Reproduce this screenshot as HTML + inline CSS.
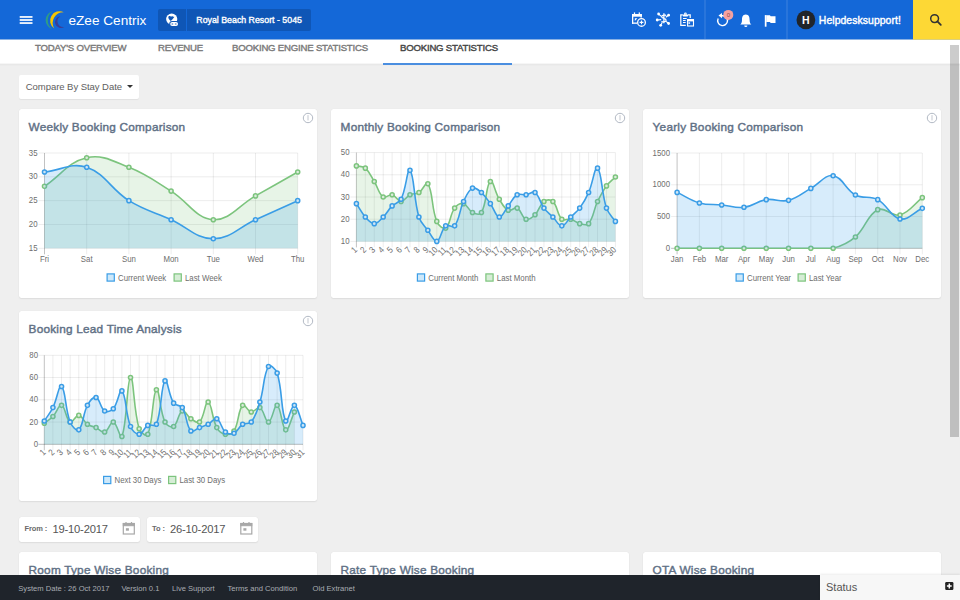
<!DOCTYPE html>
<html><head><meta charset="utf-8">
<style>
*{margin:0;padding:0;box-sizing:border-box}
html,body{width:960px;height:600px;overflow:hidden;background:#efefef;font-family:"Liberation Sans",sans-serif}
.abs{position:absolute}
#hdr{left:0;top:0;width:960px;height:39px;background:#1468d8}
.card{position:absolute;background:#fff;border-radius:2.5px;box-shadow:0 0 1px rgba(0,0,0,0.09),0 1px 1.5px rgba(0,0,0,0.07)}
.ttl{position:absolute;font-weight:normal;font-size:11.8px;color:#607085;white-space:nowrap;letter-spacing:0.22px;-webkit-text-stroke:0.42px #607085}
.tab{position:absolute;top:42.3px;font-size:9.6px;font-weight:normal;color:#7a7a7a;white-space:nowrap;letter-spacing:-0.2px;-webkit-text-stroke:0.4px #7a7a7a}
.tk{font-family:"Liberation Sans",sans-serif;font-size:9px;fill:#6e6e6e}
svg{position:absolute;left:0;top:0}
.ft{position:absolute;top:584px;font-size:7.6px;color:#a9adb3;white-space:nowrap}
</style></head><body>
<svg width="960" height="70" style="position:absolute;left:0;top:0"><rect x="0" y="0" width="960" height="39.6" fill="#1468d8"/><rect x="0" y="39.1" width="913" height="0.5" fill="#0e5cc4"/><rect x="0" y="39.6" width="960" height="24.15" fill="#fff"/><rect x="0" y="63.75" width="960" height="1.65" fill="#e8e8e8"/></svg>
<svg width="960" height="40" viewBox="0 0 960 40" style="position:absolute;left:0;top:0">
<!-- hamburger -->
<rect x="19.7" y="16.1" width="12.8" height="1.7" fill="#fff"/>
<rect x="19.7" y="19.15" width="12.8" height="1.7" fill="#fff"/>
<rect x="19.7" y="22.2" width="12.8" height="1.7" fill="#fff"/>
<!-- logo -->
<path d="M53.5 11 A9.33 9.33 0 0 0 52.8 29.3 A10.51 10.51 0 0 1 53.5 11Z" fill="#2f9c86"/>
<path d="M63.8 12.2 A9.45 9.45 0 0 0 54.3 28.5 A10.72 10.72 0 0 1 63.8 12.2Z" fill="#f7c600"/>
<path d="M60.3 16.3 A5.9 5.9 0 1 0 64.3 27 A5.82 5.82 0 0 1 60.3 16.3Z" fill="#3b3f96"/>
<!-- globe -->
<rect x="158" y="9" width="28" height="22" rx="2" fill="#0f56b6"/>
<rect x="187" y="9" width="124" height="22" rx="2" fill="#0f56b6"/>
<rect x="185" y="9" width="3" height="22" fill="#0f56b6"/>
<rect x="186" y="9" width="1" height="22" fill="#1468d8"/>
<circle cx="171.7" cy="19.1" r="5.6" fill="#fff"/>
<path d="M168.3 17.2 C168.5 15.6 170.4 15.7 171.2 16.8 C171.7 16.2 172.6 16.2 173.1 16.8 C173.6 16.6 174.1 16.6 174.3 16.9 C173.4 18.3 172.2 19.6 170.8 21 C169.6 19.9 168.2 18.8 168.3 17.2Z" fill="#0f56b6"/>
<rect x="169.2" y="21" width="9.8" height="5.9" rx="2.9" fill="#0f56b6"/>
<rect x="170.2" y="22" width="7.8" height="3.9" rx="1.95" fill="#fff"/>
<rect x="171.4" y="23.2" width="2" height="1.5" rx="0.7" fill="#6a97d6"/>
<rect x="174.7" y="23.2" width="2" height="1.5" rx="0.7" fill="#6a97d6"/>
<!-- icon1 calendar plus -->
<rect x="632" y="14" width="9.8" height="2.7" fill="#fff"/>
<rect x="632" y="14" width="1.3" height="9.8" fill="#fff"/>
<rect x="632" y="22.5" width="5" height="1.3" fill="#fff"/>
<rect x="640.5" y="14" width="1.3" height="3.6" fill="#fff"/>
<rect x="633.9" y="12.4" width="1.2" height="2.2" fill="#fff"/>
<rect x="638.7" y="12.4" width="1.2" height="2.2" fill="#fff"/>
<path d="M634.8 18.3H637.4L634.8 20.9Z" fill="#fff"/>
<circle cx="641.5" cy="22.4" r="3.85" fill="#1468d8" stroke="#fff" stroke-width="1.3"/>
<path d="M641.5 20.5V24.3 M639.6 22.4H643.4" stroke="#fff" stroke-width="1.1"/>
<!-- icon2 network dollar -->
<path d="M658.6 14L661.6 16.6 M668.6 15.2L665.8 17.3 M657.2 20L661.2 19.6 M660.7 25.3L662.2 22.6 M668.6 23.5L666 21.4" stroke="#fff" stroke-width="1.1"/>
<circle cx="658.6" cy="14" r="1.4" fill="#fff"/><circle cx="668.6" cy="15.2" r="1.4" fill="#fff"/>
<circle cx="657.2" cy="20" r="1.4" fill="#fff"/><circle cx="660.7" cy="25.3" r="1.4" fill="#fff"/>
<circle cx="668.6" cy="23.5" r="1.4" fill="#fff"/>
<path d="M666.1 15.6C665.4 14.8 661.7 14.5 661.7 16.7C661.7 18.7 666.1 18 666.1 20.2C666.1 22.4 662.1 22.2 661.5 21.3 M663.9 13.3V23.3" fill="none" stroke="#fff" stroke-width="1.25"/>
<!-- icon3 clipboard calendar -->
<path d="M682.8 14.8H680.8V25.3H685.8 M687.8 14.8H690.2V18" fill="none" stroke="#fff" stroke-width="1.2"/>
<rect x="682.8" y="14.6" width="5.2" height="1.8" rx="0.6" fill="#fff"/>
<circle cx="685.4" cy="13.9" r="1.35" fill="#fff"/>
<circle cx="685.4" cy="13.9" r="0.45" fill="#1468d8"/>
<path d="M683 18.5H686.7 M683 20.5H685.7 M683 22.5H685.7" stroke="#fff" stroke-width="1"/>
<rect x="687.6" y="19.7" width="5.9" height="6.3" fill="#1468d8" stroke="#fff" stroke-width="1.1"/>
<rect x="687.1" y="19.1" width="6.9" height="2.3" fill="#fff"/>
<rect x="688.4" y="22.3" width="1.7" height="1.5" fill="#fff"/>
<!-- dividers -->
<rect x="704.5" y="0" width="1" height="39" fill="rgba(255,255,255,0.18)"/>
<rect x="786.5" y="0" width="1" height="39" fill="rgba(255,255,255,0.18)"/>
<!-- undo -->
<path d="M718.2 18.5 A4.9 4.9 0 1 0 722 15.8" fill="none" stroke="#fff" stroke-width="1.4"/>
<path d="M718.5 15.6L722 12.9V18.3Z" fill="#fff"/>
<circle cx="728.3" cy="14.9" r="5" fill="#f4a1a1"/>
<text x="728.3" y="17.1" text-anchor="middle" font-family="Liberation Sans" font-size="6" fill="#8c4848">0</text>
<!-- bell -->
<path d="M745.8 14.6 C742.6 14.6 742 17.5 742 20 C742 22.5 741.2 23.8 740.2 24.6H751.4C750.4 23.8 749.6 22.5 749.6 20 C749.6 17.5 749 14.6 745.8 14.6Z" fill="#fff"/>
<path d="M744.2 25.5 A1.6 1.6 0 0 0 747.4 25.5Z" fill="#fff"/>
<!-- flag -->
<rect x="764.8" y="15.1" width="1.7" height="11.6" fill="#fff"/>
<path d="M766.3 15.3H769.9L770.7 16.3H775.5V22.9H770.7L769.9 21.9H766.3Z" fill="#fff"/>
<!-- avatar -->
<circle cx="805.9" cy="19.9" r="9.4" fill="#20252b"/>
<text x="805.9" y="23.6" text-anchor="middle" font-family="Liberation Sans" font-size="10.5" font-weight="bold" fill="#fff">H</text>
<!-- search -->
<rect x="913" y="0" width="47" height="39.6" fill="#fdd835"/>
<circle cx="934.6" cy="18.6" r="3.9" fill="none" stroke="#333" stroke-width="1.5"/>
<path d="M937.4 21.4L940.8 24.8" stroke="#333" stroke-width="1.8" stroke-linecap="round"/>
</svg>
<div class="abs" style="left:68.5px;top:12.8px;font-size:13.6px;color:#fff;white-space:nowrap">eZee Centrix</div>
<div class="abs" style="left:196.3px;top:14.9px;font-size:8.8px;font-weight:normal;color:#fff;white-space:nowrap;-webkit-text-stroke:0.35px #fff">Royal Beach Resort - 5045</div>
<div class="abs" style="left:818.8px;top:14.8px;font-size:10.4px;font-weight:normal;color:#fff;white-space:nowrap;letter-spacing:0.08px;-webkit-text-stroke:0.4px #fff">Helpdesksupport!</div>
<!-- tab bar -->

<div class="tab" style="left:35px">TODAY'S OVERVIEW</div>
<div class="tab" style="left:158px">REVENUE</div>
<div class="tab" style="left:232px">BOOKING ENGINE STATISTICS</div>
<div class="tab" style="left:400px;color:#454545;-webkit-text-stroke:0.4px #454545">BOOKING STATISTICS</div>
<svg width="960" height="70" style="position:absolute;left:0;top:0"><rect x="383" y="63" width="129" height="2" fill="#4a8ee0"/></svg>
<!-- compare dropdown -->
<div class="abs" style="left:19px;top:75px;width:120px;height:24px;background:#fff;border-radius:2px;box-shadow:0 1px 1px rgba(0,0,0,0.06)"></div>
<div class="abs" style="left:25.8px;top:81.2px;font-size:9.5px;color:#5e5e5e;white-space:nowrap;letter-spacing:-0.05px">Compare By Stay Date</div>
<div class="abs" style="left:126.8px;top:85.2px;width:0;height:0;border-left:3px solid transparent;border-right:3px solid transparent;border-top:3.5px solid #333"></div>
<!-- cards -->
<div class="card" style="left:19px;top:109px;width:298px;height:189px"></div>
<div class="card" style="left:331px;top:109px;width:298px;height:189px"></div>
<div class="card" style="left:643px;top:109px;width:298px;height:189px"></div>
<div class="card" style="left:19px;top:311px;width:298px;height:189.5px"></div>
<div class="ttl" style="left:28.6px;top:120.3px">Weekly Booking Comparison</div>
<div class="ttl" style="left:340.6px;top:120.3px">Monthly Booking Comparison</div>
<div class="ttl" style="left:652.6px;top:120.3px">Yearly Booking Comparison</div>
<div class="ttl" style="left:28.6px;top:322.3px">Booking Lead Time Analysis</div>
<!-- dates -->
<div class="card" style="left:19px;top:517px;width:121px;height:25px"></div>
<div class="card" style="left:147px;top:517px;width:111px;height:25px"></div>
<div class="abs" style="left:24.5px;top:524px;font-size:7.5px;font-weight:bold;color:#6a6a6a;white-space:nowrap;letter-spacing:-0.1px">From :</div>
<div class="abs" style="left:52.5px;top:523.2px;font-size:11.2px;color:#555;white-space:nowrap;letter-spacing:-0.2px">19-10-2017</div>
<div class="abs" style="left:152px;top:524px;font-size:7.5px;font-weight:bold;color:#6a6a6a;white-space:nowrap;letter-spacing:-0.1px">To :</div>
<div class="abs" style="left:170px;top:523.2px;font-size:11.2px;color:#555;white-space:nowrap;letter-spacing:-0.2px">26-10-2017</div>
<svg width="960" height="600" style="position:absolute;left:0;top:0">
<g fill="none" stroke="#a8a8a8">
<rect x="123.3" y="523.5" width="11" height="10.5" stroke-width="1.2"/>
<rect x="123.3" y="523.5" width="11" height="2.2" fill="#a8a8a8" stroke-width="1"/>
<path d="M126 522V524.5 M131.5 522V524.5" stroke-width="1.2"/>
<rect x="125.9" y="528.2" width="3" height="2.5" fill="#a8a8a8" stroke="none"/>
</g>
<g fill="none" stroke="#a8a8a8" transform="translate(117.5 0)">
<rect x="123.3" y="523.5" width="11" height="10.5" stroke-width="1.2"/>
<rect x="123.3" y="523.5" width="11" height="2.2" fill="#a8a8a8" stroke-width="1"/>
<path d="M126 522V524.5 M131.5 522V524.5" stroke-width="1.2"/>
<rect x="125.9" y="528.2" width="3" height="2.5" fill="#a8a8a8" stroke="none"/>
</g>
</svg>
<!-- row 3 -->
<div class="card" style="left:19px;top:552px;width:298px;height:60px"></div>
<div class="card" style="left:331px;top:552px;width:298px;height:60px"></div>
<div class="card" style="left:643px;top:552px;width:298px;height:60px"></div>
<div class="ttl" style="left:28.6px;top:562.7px">Room Type Wise Booking</div>
<div class="ttl" style="left:340.6px;top:562.7px">Rate Type Wise Booking</div>
<div class="ttl" style="left:652.6px;top:562.7px">OTA Wise Booking</div>
<svg width="960" height="600" viewBox="0 0 960 600">
<path d="M38.50 248.30H297.70M38.50 224.48H297.70M38.50 200.65H297.70M38.50 176.82H297.70M38.50 153.00H297.70M44.50 153.00V254.30M86.70 153.00V254.30M128.90 153.00V254.30M171.10 153.00V254.30M213.30 153.00V254.30M255.50 153.00V254.30M297.70 153.00V254.30" stroke="rgba(0,0,0,0.075)" stroke-width="1" fill="none"/>
<path d="M44.50 153.00V254.30" stroke="rgba(0,0,0,0.2)" stroke-width="0.9" fill="none"/>
<path d="M44.50 186.36C61.38 174.92 68.44 161.89 86.70 157.76C102.20 154.26 112.98 161.00 128.90 167.30C146.74 174.34 154.65 180.90 171.10 191.12C188.41 201.87 195.99 218.73 213.30 219.71C229.75 220.64 238.62 205.41 255.50 195.88C272.38 186.35 280.82 181.59 297.70 172.06L297.70 248.30L44.50 248.30Z" fill="#5cb85c" fill-opacity="0.15" stroke="none"/>
<path d="M44.50 186.36C61.38 174.92 68.44 161.89 86.70 157.76C102.20 154.26 112.98 161.00 128.90 167.30C146.74 174.34 154.65 180.90 171.10 191.12C188.41 201.87 195.99 218.73 213.30 219.71C229.75 220.64 238.62 205.41 255.50 195.88C272.38 186.35 280.82 181.59 297.70 172.06" fill="none" stroke="#7cc47d" stroke-width="1.6"/>
<circle cx="44.50" cy="186.36" r="2.05" fill="#dcebdc" stroke="#7cc47d" stroke-width="1.5"/>
<circle cx="86.70" cy="157.76" r="2.05" fill="#dcebdc" stroke="#7cc47d" stroke-width="1.5"/>
<circle cx="128.90" cy="167.30" r="2.05" fill="#dcebdc" stroke="#7cc47d" stroke-width="1.5"/>
<circle cx="171.10" cy="191.12" r="2.05" fill="#dcebdc" stroke="#7cc47d" stroke-width="1.5"/>
<circle cx="213.30" cy="219.71" r="2.05" fill="#dcebdc" stroke="#7cc47d" stroke-width="1.5"/>
<circle cx="255.50" cy="195.88" r="2.05" fill="#dcebdc" stroke="#7cc47d" stroke-width="1.5"/>
<circle cx="297.70" cy="172.06" r="2.05" fill="#dcebdc" stroke="#7cc47d" stroke-width="1.5"/>
<path d="M44.50 172.06C61.38 170.15 71.81 162.25 86.70 167.30C105.57 173.69 110.76 189.38 128.90 200.65C144.52 210.35 154.22 212.09 171.10 219.71C187.98 227.33 196.42 238.77 213.30 238.77C230.18 238.77 238.62 227.33 255.50 219.71C272.38 212.09 280.82 208.27 297.70 200.65L297.70 248.30L44.50 248.30Z" fill="#36a2eb" fill-opacity="0.2" stroke="none"/>
<path d="M44.50 172.06C61.38 170.15 71.81 162.25 86.70 167.30C105.57 173.69 110.76 189.38 128.90 200.65C144.52 210.35 154.22 212.09 171.10 219.71C187.98 227.33 196.42 238.77 213.30 238.77C230.18 238.77 238.62 227.33 255.50 219.71C272.38 212.09 280.82 208.27 297.70 200.65" fill="none" stroke="#3a9de6" stroke-width="1.6"/>
<circle cx="44.50" cy="172.06" r="2.05" fill="#cfe5f5" stroke="#3a9de6" stroke-width="1.5"/>
<circle cx="86.70" cy="167.30" r="2.05" fill="#cfe5f5" stroke="#3a9de6" stroke-width="1.5"/>
<circle cx="128.90" cy="200.65" r="2.05" fill="#cfe5f5" stroke="#3a9de6" stroke-width="1.5"/>
<circle cx="171.10" cy="219.71" r="2.05" fill="#cfe5f5" stroke="#3a9de6" stroke-width="1.5"/>
<circle cx="213.30" cy="238.77" r="2.05" fill="#cfe5f5" stroke="#3a9de6" stroke-width="1.5"/>
<circle cx="255.50" cy="219.71" r="2.05" fill="#cfe5f5" stroke="#3a9de6" stroke-width="1.5"/>
<circle cx="297.70" cy="200.65" r="2.05" fill="#cfe5f5" stroke="#3a9de6" stroke-width="1.5"/>
<text x="37.50" y="250.90" text-anchor="end" class="tk" textLength="8.71" lengthAdjust="spacingAndGlyphs">15</text>
<text x="37.50" y="227.08" text-anchor="end" class="tk" textLength="8.71" lengthAdjust="spacingAndGlyphs">20</text>
<text x="37.50" y="203.25" text-anchor="end" class="tk" textLength="8.71" lengthAdjust="spacingAndGlyphs">25</text>
<text x="37.50" y="179.42" text-anchor="end" class="tk" textLength="8.71" lengthAdjust="spacingAndGlyphs">30</text>
<text x="37.50" y="155.60" text-anchor="end" class="tk" textLength="8.71" lengthAdjust="spacingAndGlyphs">35</text>
<text x="44.50" y="262.00" text-anchor="middle" class="tk" textLength="9.13" lengthAdjust="spacingAndGlyphs">Fri</text>
<text x="86.70" y="262.00" text-anchor="middle" class="tk" textLength="11.75" lengthAdjust="spacingAndGlyphs">Sat</text>
<text x="128.90" y="262.00" text-anchor="middle" class="tk" textLength="13.93" lengthAdjust="spacingAndGlyphs">Sun</text>
<text x="171.10" y="262.00" text-anchor="middle" class="tk" textLength="15.23" lengthAdjust="spacingAndGlyphs">Mon</text>
<text x="213.30" y="262.00" text-anchor="middle" class="tk" textLength="13.20" lengthAdjust="spacingAndGlyphs">Tue</text>
<text x="255.50" y="262.00" text-anchor="middle" class="tk" textLength="15.96" lengthAdjust="spacingAndGlyphs">Wed</text>
<text x="297.70" y="262.00" text-anchor="middle" class="tk" textLength="13.49" lengthAdjust="spacingAndGlyphs">Thu</text>
<rect x="107.10" y="273.90" width="7.2" height="7.2" fill="#36a2eb" fill-opacity="0.25" stroke="#3a9de6" stroke-width="1.2"/>
<text x="118.00" y="280.70" class="tk" textLength="48.15" lengthAdjust="spacingAndGlyphs">Current Week</text>
<rect x="174.10" y="273.90" width="7.2" height="7.2" fill="#5cb85c" fill-opacity="0.25" stroke="#7cc47d" stroke-width="1.2"/>
<text x="185.00" y="280.70" class="tk" textLength="36.85" lengthAdjust="spacingAndGlyphs">Last Week</text>
<path d="M350.40 241.40H615.40M350.40 219.20H615.40M350.40 197.00H615.40M350.40 174.80H615.40M350.40 152.60H615.40M356.40 152.60V247.40M365.33 152.60V247.40M374.26 152.60V247.40M383.19 152.60V247.40M392.12 152.60V247.40M401.06 152.60V247.40M409.99 152.60V247.40M418.92 152.60V247.40M427.85 152.60V247.40M436.78 152.60V247.40M445.71 152.60V247.40M454.64 152.60V247.40M463.57 152.60V247.40M472.50 152.60V247.40M481.43 152.60V247.40M490.37 152.60V247.40M499.30 152.60V247.40M508.23 152.60V247.40M517.16 152.60V247.40M526.09 152.60V247.40M535.02 152.60V247.40M543.95 152.60V247.40M552.88 152.60V247.40M561.81 152.60V247.40M570.74 152.60V247.40M579.68 152.60V247.40M588.61 152.60V247.40M597.54 152.60V247.40M606.47 152.60V247.40M615.40 152.60V247.40" stroke="rgba(0,0,0,0.075)" stroke-width="1" fill="none"/>
<path d="M356.40 152.60V247.40" stroke="rgba(0,0,0,0.2)" stroke-width="0.9" fill="none"/>
<path d="M356.40 165.92C359.97 166.81 362.73 165.87 365.33 168.14C369.87 172.09 370.89 176.01 374.26 181.46C378.03 187.55 378.47 193.48 383.19 197.00C385.62 198.81 388.89 193.98 392.12 194.78C396.04 195.75 397.48 201.44 401.06 201.44C404.63 201.44 406.07 196.73 409.99 194.78C413.22 193.17 415.90 194.43 418.92 192.56C423.05 189.99 426.10 180.85 427.85 183.68C433.24 192.39 431.23 207.62 436.78 221.42C438.37 225.38 443.30 229.88 445.71 228.08C450.44 224.55 449.73 214.81 454.64 208.10C456.88 205.04 460.41 202.88 463.57 203.66C467.56 204.65 468.32 210.46 472.50 212.54C475.47 214.01 479.89 215.23 481.43 212.54C487.03 202.80 485.94 184.76 490.37 181.46C493.09 179.43 495.13 192.50 499.30 199.22C502.28 204.04 503.89 208.16 508.23 210.32C511.03 211.71 514.35 206.71 517.16 208.10C521.50 210.26 521.89 217.63 526.09 219.20C529.03 220.30 532.28 217.48 535.02 214.76C539.43 210.38 539.36 204.86 543.95 201.44C546.51 199.53 550.67 199.24 552.88 201.44C557.81 206.34 556.88 214.30 561.81 219.20C564.03 221.40 567.37 218.36 570.74 219.20C574.51 220.14 575.91 222.70 579.68 223.64C583.05 224.48 586.67 226.05 588.61 223.64C593.81 217.17 593.45 210.07 597.54 201.44C600.60 194.98 602.27 191.64 606.47 185.90C609.42 181.87 611.83 180.57 615.40 177.02L615.40 241.40L356.40 241.40Z" fill="#5cb85c" fill-opacity="0.15" stroke="none"/>
<path d="M356.40 165.92C359.97 166.81 362.73 165.87 365.33 168.14C369.87 172.09 370.89 176.01 374.26 181.46C378.03 187.55 378.47 193.48 383.19 197.00C385.62 198.81 388.89 193.98 392.12 194.78C396.04 195.75 397.48 201.44 401.06 201.44C404.63 201.44 406.07 196.73 409.99 194.78C413.22 193.17 415.90 194.43 418.92 192.56C423.05 189.99 426.10 180.85 427.85 183.68C433.24 192.39 431.23 207.62 436.78 221.42C438.37 225.38 443.30 229.88 445.71 228.08C450.44 224.55 449.73 214.81 454.64 208.10C456.88 205.04 460.41 202.88 463.57 203.66C467.56 204.65 468.32 210.46 472.50 212.54C475.47 214.01 479.89 215.23 481.43 212.54C487.03 202.80 485.94 184.76 490.37 181.46C493.09 179.43 495.13 192.50 499.30 199.22C502.28 204.04 503.89 208.16 508.23 210.32C511.03 211.71 514.35 206.71 517.16 208.10C521.50 210.26 521.89 217.63 526.09 219.20C529.03 220.30 532.28 217.48 535.02 214.76C539.43 210.38 539.36 204.86 543.95 201.44C546.51 199.53 550.67 199.24 552.88 201.44C557.81 206.34 556.88 214.30 561.81 219.20C564.03 221.40 567.37 218.36 570.74 219.20C574.51 220.14 575.91 222.70 579.68 223.64C583.05 224.48 586.67 226.05 588.61 223.64C593.81 217.17 593.45 210.07 597.54 201.44C600.60 194.98 602.27 191.64 606.47 185.90C609.42 181.87 611.83 180.57 615.40 177.02" fill="none" stroke="#7cc47d" stroke-width="1.6"/>
<circle cx="356.40" cy="165.92" r="2.05" fill="#dcebdc" stroke="#7cc47d" stroke-width="1.5"/>
<circle cx="365.33" cy="168.14" r="2.05" fill="#dcebdc" stroke="#7cc47d" stroke-width="1.5"/>
<circle cx="374.26" cy="181.46" r="2.05" fill="#dcebdc" stroke="#7cc47d" stroke-width="1.5"/>
<circle cx="383.19" cy="197.00" r="2.05" fill="#dcebdc" stroke="#7cc47d" stroke-width="1.5"/>
<circle cx="392.12" cy="194.78" r="2.05" fill="#dcebdc" stroke="#7cc47d" stroke-width="1.5"/>
<circle cx="401.06" cy="201.44" r="2.05" fill="#dcebdc" stroke="#7cc47d" stroke-width="1.5"/>
<circle cx="409.99" cy="194.78" r="2.05" fill="#dcebdc" stroke="#7cc47d" stroke-width="1.5"/>
<circle cx="418.92" cy="192.56" r="2.05" fill="#dcebdc" stroke="#7cc47d" stroke-width="1.5"/>
<circle cx="427.85" cy="183.68" r="2.05" fill="#dcebdc" stroke="#7cc47d" stroke-width="1.5"/>
<circle cx="436.78" cy="221.42" r="2.05" fill="#dcebdc" stroke="#7cc47d" stroke-width="1.5"/>
<circle cx="445.71" cy="228.08" r="2.05" fill="#dcebdc" stroke="#7cc47d" stroke-width="1.5"/>
<circle cx="454.64" cy="208.10" r="2.05" fill="#dcebdc" stroke="#7cc47d" stroke-width="1.5"/>
<circle cx="463.57" cy="203.66" r="2.05" fill="#dcebdc" stroke="#7cc47d" stroke-width="1.5"/>
<circle cx="472.50" cy="212.54" r="2.05" fill="#dcebdc" stroke="#7cc47d" stroke-width="1.5"/>
<circle cx="481.43" cy="212.54" r="2.05" fill="#dcebdc" stroke="#7cc47d" stroke-width="1.5"/>
<circle cx="490.37" cy="181.46" r="2.05" fill="#dcebdc" stroke="#7cc47d" stroke-width="1.5"/>
<circle cx="499.30" cy="199.22" r="2.05" fill="#dcebdc" stroke="#7cc47d" stroke-width="1.5"/>
<circle cx="508.23" cy="210.32" r="2.05" fill="#dcebdc" stroke="#7cc47d" stroke-width="1.5"/>
<circle cx="517.16" cy="208.10" r="2.05" fill="#dcebdc" stroke="#7cc47d" stroke-width="1.5"/>
<circle cx="526.09" cy="219.20" r="2.05" fill="#dcebdc" stroke="#7cc47d" stroke-width="1.5"/>
<circle cx="535.02" cy="214.76" r="2.05" fill="#dcebdc" stroke="#7cc47d" stroke-width="1.5"/>
<circle cx="543.95" cy="201.44" r="2.05" fill="#dcebdc" stroke="#7cc47d" stroke-width="1.5"/>
<circle cx="552.88" cy="201.44" r="2.05" fill="#dcebdc" stroke="#7cc47d" stroke-width="1.5"/>
<circle cx="561.81" cy="219.20" r="2.05" fill="#dcebdc" stroke="#7cc47d" stroke-width="1.5"/>
<circle cx="570.74" cy="219.20" r="2.05" fill="#dcebdc" stroke="#7cc47d" stroke-width="1.5"/>
<circle cx="579.68" cy="223.64" r="2.05" fill="#dcebdc" stroke="#7cc47d" stroke-width="1.5"/>
<circle cx="588.61" cy="223.64" r="2.05" fill="#dcebdc" stroke="#7cc47d" stroke-width="1.5"/>
<circle cx="597.54" cy="201.44" r="2.05" fill="#dcebdc" stroke="#7cc47d" stroke-width="1.5"/>
<circle cx="606.47" cy="185.90" r="2.05" fill="#dcebdc" stroke="#7cc47d" stroke-width="1.5"/>
<circle cx="615.40" cy="177.02" r="2.05" fill="#dcebdc" stroke="#7cc47d" stroke-width="1.5"/>
<path d="M356.40 203.66C359.97 208.99 361.12 212.26 365.33 216.98C368.26 220.26 370.69 223.64 374.26 223.64C377.83 223.64 380.06 220.10 383.19 216.98C387.20 212.99 388.11 209.87 392.12 205.88C395.26 202.76 399.13 203.05 401.06 199.22C406.28 188.84 407.21 167.60 409.99 170.36C414.35 174.70 413.58 199.06 418.92 216.98C420.72 223.03 424.06 225.13 427.85 230.30C431.21 234.90 433.62 241.40 436.78 241.40C440.76 240.41 440.94 230.01 445.71 225.86C448.09 223.79 452.81 228.36 454.64 225.86C459.96 218.59 459.15 210.78 463.57 201.44C466.30 195.68 468.10 190.31 472.50 188.12C475.24 186.76 478.49 190.00 481.43 192.56C485.64 196.22 487.00 199.06 490.37 203.66C494.15 208.83 495.51 216.51 499.30 216.98C502.66 217.40 504.66 210.32 508.23 205.88C511.80 201.44 512.77 197.51 517.16 194.78C519.91 193.07 522.57 195.22 526.09 194.78C529.72 194.33 532.60 190.75 535.02 192.56C539.74 196.08 539.76 202.36 543.95 208.10C546.90 212.13 549.31 213.43 552.88 216.98C556.46 220.53 558.24 225.86 561.81 225.86C565.39 225.86 567.17 220.53 570.74 216.98C574.32 213.43 576.73 212.13 579.68 208.10C583.87 202.36 585.69 199.08 588.61 192.56C592.84 183.10 594.76 165.73 597.54 168.14C601.91 171.94 601.33 192.79 606.47 208.10C608.48 214.10 611.83 216.09 615.40 221.42L615.40 241.40L356.40 241.40Z" fill="#36a2eb" fill-opacity="0.2" stroke="none"/>
<path d="M356.40 203.66C359.97 208.99 361.12 212.26 365.33 216.98C368.26 220.26 370.69 223.64 374.26 223.64C377.83 223.64 380.06 220.10 383.19 216.98C387.20 212.99 388.11 209.87 392.12 205.88C395.26 202.76 399.13 203.05 401.06 199.22C406.28 188.84 407.21 167.60 409.99 170.36C414.35 174.70 413.58 199.06 418.92 216.98C420.72 223.03 424.06 225.13 427.85 230.30C431.21 234.90 433.62 241.40 436.78 241.40C440.76 240.41 440.94 230.01 445.71 225.86C448.09 223.79 452.81 228.36 454.64 225.86C459.96 218.59 459.15 210.78 463.57 201.44C466.30 195.68 468.10 190.31 472.50 188.12C475.24 186.76 478.49 190.00 481.43 192.56C485.64 196.22 487.00 199.06 490.37 203.66C494.15 208.83 495.51 216.51 499.30 216.98C502.66 217.40 504.66 210.32 508.23 205.88C511.80 201.44 512.77 197.51 517.16 194.78C519.91 193.07 522.57 195.22 526.09 194.78C529.72 194.33 532.60 190.75 535.02 192.56C539.74 196.08 539.76 202.36 543.95 208.10C546.90 212.13 549.31 213.43 552.88 216.98C556.46 220.53 558.24 225.86 561.81 225.86C565.39 225.86 567.17 220.53 570.74 216.98C574.32 213.43 576.73 212.13 579.68 208.10C583.87 202.36 585.69 199.08 588.61 192.56C592.84 183.10 594.76 165.73 597.54 168.14C601.91 171.94 601.33 192.79 606.47 208.10C608.48 214.10 611.83 216.09 615.40 221.42" fill="none" stroke="#3a9de6" stroke-width="1.6"/>
<circle cx="356.40" cy="203.66" r="2.05" fill="#cfe5f5" stroke="#3a9de6" stroke-width="1.5"/>
<circle cx="365.33" cy="216.98" r="2.05" fill="#cfe5f5" stroke="#3a9de6" stroke-width="1.5"/>
<circle cx="374.26" cy="223.64" r="2.05" fill="#cfe5f5" stroke="#3a9de6" stroke-width="1.5"/>
<circle cx="383.19" cy="216.98" r="2.05" fill="#cfe5f5" stroke="#3a9de6" stroke-width="1.5"/>
<circle cx="392.12" cy="205.88" r="2.05" fill="#cfe5f5" stroke="#3a9de6" stroke-width="1.5"/>
<circle cx="401.06" cy="199.22" r="2.05" fill="#cfe5f5" stroke="#3a9de6" stroke-width="1.5"/>
<circle cx="409.99" cy="170.36" r="2.05" fill="#cfe5f5" stroke="#3a9de6" stroke-width="1.5"/>
<circle cx="418.92" cy="216.98" r="2.05" fill="#cfe5f5" stroke="#3a9de6" stroke-width="1.5"/>
<circle cx="427.85" cy="230.30" r="2.05" fill="#cfe5f5" stroke="#3a9de6" stroke-width="1.5"/>
<circle cx="436.78" cy="241.40" r="2.05" fill="#cfe5f5" stroke="#3a9de6" stroke-width="1.5"/>
<circle cx="445.71" cy="225.86" r="2.05" fill="#cfe5f5" stroke="#3a9de6" stroke-width="1.5"/>
<circle cx="454.64" cy="225.86" r="2.05" fill="#cfe5f5" stroke="#3a9de6" stroke-width="1.5"/>
<circle cx="463.57" cy="201.44" r="2.05" fill="#cfe5f5" stroke="#3a9de6" stroke-width="1.5"/>
<circle cx="472.50" cy="188.12" r="2.05" fill="#cfe5f5" stroke="#3a9de6" stroke-width="1.5"/>
<circle cx="481.43" cy="192.56" r="2.05" fill="#cfe5f5" stroke="#3a9de6" stroke-width="1.5"/>
<circle cx="490.37" cy="203.66" r="2.05" fill="#cfe5f5" stroke="#3a9de6" stroke-width="1.5"/>
<circle cx="499.30" cy="216.98" r="2.05" fill="#cfe5f5" stroke="#3a9de6" stroke-width="1.5"/>
<circle cx="508.23" cy="205.88" r="2.05" fill="#cfe5f5" stroke="#3a9de6" stroke-width="1.5"/>
<circle cx="517.16" cy="194.78" r="2.05" fill="#cfe5f5" stroke="#3a9de6" stroke-width="1.5"/>
<circle cx="526.09" cy="194.78" r="2.05" fill="#cfe5f5" stroke="#3a9de6" stroke-width="1.5"/>
<circle cx="535.02" cy="192.56" r="2.05" fill="#cfe5f5" stroke="#3a9de6" stroke-width="1.5"/>
<circle cx="543.95" cy="208.10" r="2.05" fill="#cfe5f5" stroke="#3a9de6" stroke-width="1.5"/>
<circle cx="552.88" cy="216.98" r="2.05" fill="#cfe5f5" stroke="#3a9de6" stroke-width="1.5"/>
<circle cx="561.81" cy="225.86" r="2.05" fill="#cfe5f5" stroke="#3a9de6" stroke-width="1.5"/>
<circle cx="570.74" cy="216.98" r="2.05" fill="#cfe5f5" stroke="#3a9de6" stroke-width="1.5"/>
<circle cx="579.68" cy="208.10" r="2.05" fill="#cfe5f5" stroke="#3a9de6" stroke-width="1.5"/>
<circle cx="588.61" cy="192.56" r="2.05" fill="#cfe5f5" stroke="#3a9de6" stroke-width="1.5"/>
<circle cx="597.54" cy="168.14" r="2.05" fill="#cfe5f5" stroke="#3a9de6" stroke-width="1.5"/>
<circle cx="606.47" cy="208.10" r="2.05" fill="#cfe5f5" stroke="#3a9de6" stroke-width="1.5"/>
<circle cx="615.40" cy="221.42" r="2.05" fill="#cfe5f5" stroke="#3a9de6" stroke-width="1.5"/>
<text x="349.50" y="244.00" text-anchor="end" class="tk" textLength="8.71" lengthAdjust="spacingAndGlyphs">10</text>
<text x="349.50" y="221.80" text-anchor="end" class="tk" textLength="8.71" lengthAdjust="spacingAndGlyphs">20</text>
<text x="349.50" y="199.60" text-anchor="end" class="tk" textLength="8.71" lengthAdjust="spacingAndGlyphs">30</text>
<text x="349.50" y="177.40" text-anchor="end" class="tk" textLength="8.71" lengthAdjust="spacingAndGlyphs">40</text>
<text x="349.50" y="155.20" text-anchor="end" class="tk" textLength="8.71" lengthAdjust="spacingAndGlyphs">50</text>
<text transform="translate(355.80 248.40) rotate(-45)" text-anchor="end" dominant-baseline="central" class="tk" textLength="4.35" lengthAdjust="spacingAndGlyphs">1</text>
<text transform="translate(364.73 248.40) rotate(-45)" text-anchor="end" dominant-baseline="central" class="tk" textLength="4.35" lengthAdjust="spacingAndGlyphs">2</text>
<text transform="translate(373.66 248.40) rotate(-45)" text-anchor="end" dominant-baseline="central" class="tk" textLength="4.35" lengthAdjust="spacingAndGlyphs">3</text>
<text transform="translate(382.59 248.40) rotate(-45)" text-anchor="end" dominant-baseline="central" class="tk" textLength="4.35" lengthAdjust="spacingAndGlyphs">4</text>
<text transform="translate(391.52 248.40) rotate(-45)" text-anchor="end" dominant-baseline="central" class="tk" textLength="4.35" lengthAdjust="spacingAndGlyphs">5</text>
<text transform="translate(400.46 248.40) rotate(-45)" text-anchor="end" dominant-baseline="central" class="tk" textLength="4.35" lengthAdjust="spacingAndGlyphs">6</text>
<text transform="translate(409.39 248.40) rotate(-45)" text-anchor="end" dominant-baseline="central" class="tk" textLength="4.35" lengthAdjust="spacingAndGlyphs">7</text>
<text transform="translate(418.32 248.40) rotate(-45)" text-anchor="end" dominant-baseline="central" class="tk" textLength="4.35" lengthAdjust="spacingAndGlyphs">8</text>
<text transform="translate(427.25 248.40) rotate(-45)" text-anchor="end" dominant-baseline="central" class="tk" textLength="4.35" lengthAdjust="spacingAndGlyphs">9</text>
<text transform="translate(436.18 248.40) rotate(-45)" text-anchor="end" dominant-baseline="central" class="tk" textLength="8.71" lengthAdjust="spacingAndGlyphs">10</text>
<text transform="translate(445.11 248.40) rotate(-45)" text-anchor="end" dominant-baseline="central" class="tk" textLength="8.13" lengthAdjust="spacingAndGlyphs">11</text>
<text transform="translate(454.04 248.40) rotate(-45)" text-anchor="end" dominant-baseline="central" class="tk" textLength="8.71" lengthAdjust="spacingAndGlyphs">12</text>
<text transform="translate(462.97 248.40) rotate(-45)" text-anchor="end" dominant-baseline="central" class="tk" textLength="8.71" lengthAdjust="spacingAndGlyphs">13</text>
<text transform="translate(471.90 248.40) rotate(-45)" text-anchor="end" dominant-baseline="central" class="tk" textLength="8.71" lengthAdjust="spacingAndGlyphs">14</text>
<text transform="translate(480.83 248.40) rotate(-45)" text-anchor="end" dominant-baseline="central" class="tk" textLength="8.71" lengthAdjust="spacingAndGlyphs">15</text>
<text transform="translate(489.77 248.40) rotate(-45)" text-anchor="end" dominant-baseline="central" class="tk" textLength="8.71" lengthAdjust="spacingAndGlyphs">16</text>
<text transform="translate(498.70 248.40) rotate(-45)" text-anchor="end" dominant-baseline="central" class="tk" textLength="8.71" lengthAdjust="spacingAndGlyphs">17</text>
<text transform="translate(507.63 248.40) rotate(-45)" text-anchor="end" dominant-baseline="central" class="tk" textLength="8.71" lengthAdjust="spacingAndGlyphs">18</text>
<text transform="translate(516.56 248.40) rotate(-45)" text-anchor="end" dominant-baseline="central" class="tk" textLength="8.71" lengthAdjust="spacingAndGlyphs">19</text>
<text transform="translate(525.49 248.40) rotate(-45)" text-anchor="end" dominant-baseline="central" class="tk" textLength="8.71" lengthAdjust="spacingAndGlyphs">20</text>
<text transform="translate(534.42 248.40) rotate(-45)" text-anchor="end" dominant-baseline="central" class="tk" textLength="8.71" lengthAdjust="spacingAndGlyphs">21</text>
<text transform="translate(543.35 248.40) rotate(-45)" text-anchor="end" dominant-baseline="central" class="tk" textLength="8.71" lengthAdjust="spacingAndGlyphs">22</text>
<text transform="translate(552.28 248.40) rotate(-45)" text-anchor="end" dominant-baseline="central" class="tk" textLength="8.71" lengthAdjust="spacingAndGlyphs">23</text>
<text transform="translate(561.21 248.40) rotate(-45)" text-anchor="end" dominant-baseline="central" class="tk" textLength="8.71" lengthAdjust="spacingAndGlyphs">24</text>
<text transform="translate(570.14 248.40) rotate(-45)" text-anchor="end" dominant-baseline="central" class="tk" textLength="8.71" lengthAdjust="spacingAndGlyphs">25</text>
<text transform="translate(579.08 248.40) rotate(-45)" text-anchor="end" dominant-baseline="central" class="tk" textLength="8.71" lengthAdjust="spacingAndGlyphs">26</text>
<text transform="translate(588.01 248.40) rotate(-45)" text-anchor="end" dominant-baseline="central" class="tk" textLength="8.71" lengthAdjust="spacingAndGlyphs">27</text>
<text transform="translate(596.94 248.40) rotate(-45)" text-anchor="end" dominant-baseline="central" class="tk" textLength="8.71" lengthAdjust="spacingAndGlyphs">28</text>
<text transform="translate(605.87 248.40) rotate(-45)" text-anchor="end" dominant-baseline="central" class="tk" textLength="8.71" lengthAdjust="spacingAndGlyphs">29</text>
<text transform="translate(614.80 248.40) rotate(-45)" text-anchor="end" dominant-baseline="central" class="tk" textLength="8.71" lengthAdjust="spacingAndGlyphs">30</text>
<rect x="417.40" y="273.90" width="7.2" height="7.2" fill="#36a2eb" fill-opacity="0.25" stroke="#3a9de6" stroke-width="1.2"/>
<text x="428.30" y="280.70" class="tk" textLength="50.04" lengthAdjust="spacingAndGlyphs">Current Month</text>
<rect x="485.90" y="273.90" width="7.2" height="7.2" fill="#5cb85c" fill-opacity="0.25" stroke="#7cc47d" stroke-width="1.2"/>
<text x="496.80" y="280.70" class="tk" textLength="38.73" lengthAdjust="spacingAndGlyphs">Last Month</text>
<path d="M671.10 248.30H922.30M671.10 216.53H922.30M671.10 184.77H922.30M671.10 153.00H922.30M677.10 153.00V254.30M699.39 153.00V254.30M721.68 153.00V254.30M743.97 153.00V254.30M766.26 153.00V254.30M788.55 153.00V254.30M810.85 153.00V254.30M833.14 153.00V254.30M855.43 153.00V254.30M877.72 153.00V254.30M900.01 153.00V254.30M922.30 153.00V254.30" stroke="rgba(0,0,0,0.075)" stroke-width="1" fill="none"/>
<path d="M677.10 153.00V254.30" stroke="rgba(0,0,0,0.2)" stroke-width="0.9" fill="none"/>
<path d="M671.10 248.30H922.30" stroke="rgba(0,0,0,0.2)" stroke-width="1" fill="none"/>
<path d="M677.10 248.30C686.02 248.30 690.47 248.30 699.39 248.30C708.31 248.30 712.77 248.30 721.68 248.30C730.60 248.30 735.06 248.30 743.97 248.30C752.89 248.30 757.35 248.30 766.26 248.30C775.18 248.30 779.64 248.30 788.55 248.30C797.47 248.30 801.93 248.30 810.85 248.30C819.76 248.30 824.74 248.30 833.14 248.30C842.57 245.89 848.02 243.35 855.43 236.93C865.85 227.90 866.91 215.00 877.72 209.67C884.75 206.21 892.02 217.10 900.01 214.94C909.85 212.29 913.38 204.58 922.30 197.66L922.30 248.30L677.10 248.30Z" fill="#5cb85c" fill-opacity="0.15" stroke="none"/>
<path d="M677.10 248.30C686.02 248.30 690.47 248.30 699.39 248.30C708.31 248.30 712.77 248.30 721.68 248.30C730.60 248.30 735.06 248.30 743.97 248.30C752.89 248.30 757.35 248.30 766.26 248.30C775.18 248.30 779.64 248.30 788.55 248.30C797.47 248.30 801.93 248.30 810.85 248.30C819.76 248.30 824.74 248.30 833.14 248.30C842.57 245.89 848.02 243.35 855.43 236.93C865.85 227.90 866.91 215.00 877.72 209.67C884.75 206.21 892.02 217.10 900.01 214.94C909.85 212.29 913.38 204.58 922.30 197.66" fill="none" stroke="#7cc47d" stroke-width="1.6"/>
<circle cx="677.10" cy="248.30" r="2.05" fill="#dcebdc" stroke="#7cc47d" stroke-width="1.5"/>
<circle cx="699.39" cy="248.30" r="2.05" fill="#dcebdc" stroke="#7cc47d" stroke-width="1.5"/>
<circle cx="721.68" cy="248.30" r="2.05" fill="#dcebdc" stroke="#7cc47d" stroke-width="1.5"/>
<circle cx="743.97" cy="248.30" r="2.05" fill="#dcebdc" stroke="#7cc47d" stroke-width="1.5"/>
<circle cx="766.26" cy="248.30" r="2.05" fill="#dcebdc" stroke="#7cc47d" stroke-width="1.5"/>
<circle cx="788.55" cy="248.30" r="2.05" fill="#dcebdc" stroke="#7cc47d" stroke-width="1.5"/>
<circle cx="810.85" cy="248.30" r="2.05" fill="#dcebdc" stroke="#7cc47d" stroke-width="1.5"/>
<circle cx="833.14" cy="248.30" r="2.05" fill="#dcebdc" stroke="#7cc47d" stroke-width="1.5"/>
<circle cx="855.43" cy="236.93" r="2.05" fill="#dcebdc" stroke="#7cc47d" stroke-width="1.5"/>
<circle cx="877.72" cy="209.67" r="2.05" fill="#dcebdc" stroke="#7cc47d" stroke-width="1.5"/>
<circle cx="900.01" cy="214.94" r="2.05" fill="#dcebdc" stroke="#7cc47d" stroke-width="1.5"/>
<circle cx="922.30" cy="197.66" r="2.05" fill="#dcebdc" stroke="#7cc47d" stroke-width="1.5"/>
<path d="M677.10 192.39C686.02 196.61 690.04 200.30 699.39 202.94C707.88 205.33 712.77 204.09 721.68 204.97C730.60 205.85 735.28 208.36 743.97 207.32C753.11 206.23 757.10 201.07 766.26 199.63C774.93 198.27 780.20 202.44 788.55 200.33C798.03 197.94 801.99 193.28 810.85 188.39C819.83 183.42 824.83 174.46 833.14 175.68C842.67 177.08 845.37 189.53 855.43 194.93C863.20 199.11 869.95 195.45 877.72 199.63C887.78 205.05 890.30 217.05 900.01 218.95C908.13 220.53 913.38 212.58 922.30 208.34L922.30 248.30L677.10 248.30Z" fill="#36a2eb" fill-opacity="0.2" stroke="none"/>
<path d="M677.10 192.39C686.02 196.61 690.04 200.30 699.39 202.94C707.88 205.33 712.77 204.09 721.68 204.97C730.60 205.85 735.28 208.36 743.97 207.32C753.11 206.23 757.10 201.07 766.26 199.63C774.93 198.27 780.20 202.44 788.55 200.33C798.03 197.94 801.99 193.28 810.85 188.39C819.83 183.42 824.83 174.46 833.14 175.68C842.67 177.08 845.37 189.53 855.43 194.93C863.20 199.11 869.95 195.45 877.72 199.63C887.78 205.05 890.30 217.05 900.01 218.95C908.13 220.53 913.38 212.58 922.30 208.34" fill="none" stroke="#3a9de6" stroke-width="1.6"/>
<circle cx="677.10" cy="192.39" r="2.05" fill="#cfe5f5" stroke="#3a9de6" stroke-width="1.5"/>
<circle cx="699.39" cy="202.94" r="2.05" fill="#cfe5f5" stroke="#3a9de6" stroke-width="1.5"/>
<circle cx="721.68" cy="204.97" r="2.05" fill="#cfe5f5" stroke="#3a9de6" stroke-width="1.5"/>
<circle cx="743.97" cy="207.32" r="2.05" fill="#cfe5f5" stroke="#3a9de6" stroke-width="1.5"/>
<circle cx="766.26" cy="199.63" r="2.05" fill="#cfe5f5" stroke="#3a9de6" stroke-width="1.5"/>
<circle cx="788.55" cy="200.33" r="2.05" fill="#cfe5f5" stroke="#3a9de6" stroke-width="1.5"/>
<circle cx="810.85" cy="188.39" r="2.05" fill="#cfe5f5" stroke="#3a9de6" stroke-width="1.5"/>
<circle cx="833.14" cy="175.68" r="2.05" fill="#cfe5f5" stroke="#3a9de6" stroke-width="1.5"/>
<circle cx="855.43" cy="194.93" r="2.05" fill="#cfe5f5" stroke="#3a9de6" stroke-width="1.5"/>
<circle cx="877.72" cy="199.63" r="2.05" fill="#cfe5f5" stroke="#3a9de6" stroke-width="1.5"/>
<circle cx="900.01" cy="218.95" r="2.05" fill="#cfe5f5" stroke="#3a9de6" stroke-width="1.5"/>
<circle cx="922.30" cy="208.34" r="2.05" fill="#cfe5f5" stroke="#3a9de6" stroke-width="1.5"/>
<text x="670.00" y="250.90" text-anchor="end" class="tk" textLength="4.35" lengthAdjust="spacingAndGlyphs">0</text>
<text x="670.00" y="219.13" text-anchor="end" class="tk" textLength="13.06" lengthAdjust="spacingAndGlyphs">500</text>
<text x="670.00" y="187.37" text-anchor="end" class="tk" textLength="17.42" lengthAdjust="spacingAndGlyphs">1000</text>
<text x="670.00" y="155.60" text-anchor="end" class="tk" textLength="17.42" lengthAdjust="spacingAndGlyphs">1500</text>
<text x="677.10" y="262.00" text-anchor="middle" class="tk" textLength="12.62" lengthAdjust="spacingAndGlyphs">Jan</text>
<text x="699.39" y="262.00" text-anchor="middle" class="tk" textLength="13.49" lengthAdjust="spacingAndGlyphs">Feb</text>
<text x="721.68" y="262.00" text-anchor="middle" class="tk" textLength="13.48" lengthAdjust="spacingAndGlyphs">Mar</text>
<text x="743.97" y="262.00" text-anchor="middle" class="tk" textLength="12.18" lengthAdjust="spacingAndGlyphs">Apr</text>
<text x="766.26" y="262.00" text-anchor="middle" class="tk" textLength="14.79" lengthAdjust="spacingAndGlyphs">May</text>
<text x="788.55" y="262.00" text-anchor="middle" class="tk" textLength="12.62" lengthAdjust="spacingAndGlyphs">Jun</text>
<text x="810.85" y="262.00" text-anchor="middle" class="tk" textLength="10.01" lengthAdjust="spacingAndGlyphs">Jul</text>
<text x="833.14" y="262.00" text-anchor="middle" class="tk" textLength="13.93" lengthAdjust="spacingAndGlyphs">Aug</text>
<text x="855.43" y="262.00" text-anchor="middle" class="tk" textLength="13.93" lengthAdjust="spacingAndGlyphs">Sep</text>
<text x="877.72" y="262.00" text-anchor="middle" class="tk" textLength="12.18" lengthAdjust="spacingAndGlyphs">Oct</text>
<text x="900.01" y="262.00" text-anchor="middle" class="tk" textLength="13.92" lengthAdjust="spacingAndGlyphs">Nov</text>
<text x="922.30" y="262.00" text-anchor="middle" class="tk" textLength="13.92" lengthAdjust="spacingAndGlyphs">Dec</text>
<rect x="736.10" y="273.90" width="7.2" height="7.2" fill="#36a2eb" fill-opacity="0.25" stroke="#3a9de6" stroke-width="1.2"/>
<text x="747.00" y="280.70" class="tk" textLength="43.96" lengthAdjust="spacingAndGlyphs">Current Year</text>
<rect x="798.10" y="273.90" width="7.2" height="7.2" fill="#5cb85c" fill-opacity="0.25" stroke="#7cc47d" stroke-width="1.2"/>
<text x="809.00" y="280.70" class="tk" textLength="32.65" lengthAdjust="spacingAndGlyphs">Last Year</text>
<path d="M38.30 444.30H303.00M38.30 422.05H303.00M38.30 399.80H303.00M38.30 377.55H303.00M38.30 355.30H303.00M44.30 355.30V450.30M52.92 355.30V450.30M61.55 355.30V450.30M70.17 355.30V450.30M78.79 355.30V450.30M87.42 355.30V450.30M96.04 355.30V450.30M104.66 355.30V450.30M113.29 355.30V450.30M121.91 355.30V450.30M130.53 355.30V450.30M139.16 355.30V450.30M147.78 355.30V450.30M156.40 355.30V450.30M165.03 355.30V450.30M173.65 355.30V450.30M182.27 355.30V450.30M190.90 355.30V450.30M199.52 355.30V450.30M208.14 355.30V450.30M216.77 355.30V450.30M225.39 355.30V450.30M234.01 355.30V450.30M242.64 355.30V450.30M251.26 355.30V450.30M259.88 355.30V450.30M268.51 355.30V450.30M277.13 355.30V450.30M285.75 355.30V450.30M294.38 355.30V450.30M303.00 355.30V450.30" stroke="rgba(0,0,0,0.075)" stroke-width="1" fill="none"/>
<path d="M44.30 355.30V450.30" stroke="rgba(0,0,0,0.2)" stroke-width="0.9" fill="none"/>
<path d="M38.30 444.30H303.00" stroke="rgba(0,0,0,0.2)" stroke-width="1" fill="none"/>
<path d="M44.30 423.16C47.75 420.49 49.91 419.60 52.92 416.49C56.81 412.48 58.59 404.41 61.55 405.36C65.49 406.63 65.81 419.52 70.17 422.05C72.70 423.52 75.56 414.96 78.79 415.38C82.46 415.85 83.47 421.47 87.42 424.28C90.36 426.37 92.67 426.09 96.04 427.61C99.57 429.21 101.74 433.00 104.66 432.06C108.64 430.78 110.25 421.27 113.29 422.05C117.15 423.05 120.39 440.43 121.91 436.51C127.29 422.63 126.85 379.21 130.53 377.55C133.74 376.10 133.40 409.78 139.16 428.73C140.30 432.47 146.51 437.16 147.78 434.29C153.41 421.59 152.43 392.61 156.40 389.79C159.33 387.71 159.68 410.67 165.03 422.05C166.58 425.36 171.22 428.07 173.65 426.50C178.11 423.62 178.10 412.81 182.27 410.93C185.00 409.69 187.06 416.23 190.90 418.71C193.95 420.68 197.47 424.04 199.52 422.05C204.36 417.36 205.06 401.03 208.14 402.03C211.96 403.26 211.85 418.42 216.77 427.61C218.75 431.33 221.66 433.57 225.39 434.29C228.56 434.90 232.25 433.90 234.01 430.95C239.15 422.33 237.72 410.75 242.64 405.36C244.62 403.19 247.61 411.57 251.26 412.04C254.51 412.46 257.36 406.12 259.88 407.59C264.26 410.13 265.25 422.47 268.51 422.05C272.14 421.58 274.23 404.05 277.13 405.36C281.13 407.17 281.84 428.32 285.75 429.84C288.74 430.99 290.93 419.16 294.38 412.04L294.38 444.30L44.30 444.30Z" fill="#5cb85c" fill-opacity="0.15" stroke="none"/>
<path d="M44.30 423.16C47.75 420.49 49.91 419.60 52.92 416.49C56.81 412.48 58.59 404.41 61.55 405.36C65.49 406.63 65.81 419.52 70.17 422.05C72.70 423.52 75.56 414.96 78.79 415.38C82.46 415.85 83.47 421.47 87.42 424.28C90.36 426.37 92.67 426.09 96.04 427.61C99.57 429.21 101.74 433.00 104.66 432.06C108.64 430.78 110.25 421.27 113.29 422.05C117.15 423.05 120.39 440.43 121.91 436.51C127.29 422.63 126.85 379.21 130.53 377.55C133.74 376.10 133.40 409.78 139.16 428.73C140.30 432.47 146.51 437.16 147.78 434.29C153.41 421.59 152.43 392.61 156.40 389.79C159.33 387.71 159.68 410.67 165.03 422.05C166.58 425.36 171.22 428.07 173.65 426.50C178.11 423.62 178.10 412.81 182.27 410.93C185.00 409.69 187.06 416.23 190.90 418.71C193.95 420.68 197.47 424.04 199.52 422.05C204.36 417.36 205.06 401.03 208.14 402.03C211.96 403.26 211.85 418.42 216.77 427.61C218.75 431.33 221.66 433.57 225.39 434.29C228.56 434.90 232.25 433.90 234.01 430.95C239.15 422.33 237.72 410.75 242.64 405.36C244.62 403.19 247.61 411.57 251.26 412.04C254.51 412.46 257.36 406.12 259.88 407.59C264.26 410.13 265.25 422.47 268.51 422.05C272.14 421.58 274.23 404.05 277.13 405.36C281.13 407.17 281.84 428.32 285.75 429.84C288.74 430.99 290.93 419.16 294.38 412.04" fill="none" stroke="#7cc47d" stroke-width="1.6"/>
<circle cx="44.30" cy="423.16" r="2.05" fill="#dcebdc" stroke="#7cc47d" stroke-width="1.5"/>
<circle cx="52.92" cy="416.49" r="2.05" fill="#dcebdc" stroke="#7cc47d" stroke-width="1.5"/>
<circle cx="61.55" cy="405.36" r="2.05" fill="#dcebdc" stroke="#7cc47d" stroke-width="1.5"/>
<circle cx="70.17" cy="422.05" r="2.05" fill="#dcebdc" stroke="#7cc47d" stroke-width="1.5"/>
<circle cx="78.79" cy="415.38" r="2.05" fill="#dcebdc" stroke="#7cc47d" stroke-width="1.5"/>
<circle cx="87.42" cy="424.28" r="2.05" fill="#dcebdc" stroke="#7cc47d" stroke-width="1.5"/>
<circle cx="96.04" cy="427.61" r="2.05" fill="#dcebdc" stroke="#7cc47d" stroke-width="1.5"/>
<circle cx="104.66" cy="432.06" r="2.05" fill="#dcebdc" stroke="#7cc47d" stroke-width="1.5"/>
<circle cx="113.29" cy="422.05" r="2.05" fill="#dcebdc" stroke="#7cc47d" stroke-width="1.5"/>
<circle cx="121.91" cy="436.51" r="2.05" fill="#dcebdc" stroke="#7cc47d" stroke-width="1.5"/>
<circle cx="130.53" cy="377.55" r="2.05" fill="#dcebdc" stroke="#7cc47d" stroke-width="1.5"/>
<circle cx="139.16" cy="428.73" r="2.05" fill="#dcebdc" stroke="#7cc47d" stroke-width="1.5"/>
<circle cx="147.78" cy="434.29" r="2.05" fill="#dcebdc" stroke="#7cc47d" stroke-width="1.5"/>
<circle cx="156.40" cy="389.79" r="2.05" fill="#dcebdc" stroke="#7cc47d" stroke-width="1.5"/>
<circle cx="165.03" cy="422.05" r="2.05" fill="#dcebdc" stroke="#7cc47d" stroke-width="1.5"/>
<circle cx="173.65" cy="426.50" r="2.05" fill="#dcebdc" stroke="#7cc47d" stroke-width="1.5"/>
<circle cx="182.27" cy="410.93" r="2.05" fill="#dcebdc" stroke="#7cc47d" stroke-width="1.5"/>
<circle cx="190.90" cy="418.71" r="2.05" fill="#dcebdc" stroke="#7cc47d" stroke-width="1.5"/>
<circle cx="199.52" cy="422.05" r="2.05" fill="#dcebdc" stroke="#7cc47d" stroke-width="1.5"/>
<circle cx="208.14" cy="402.03" r="2.05" fill="#dcebdc" stroke="#7cc47d" stroke-width="1.5"/>
<circle cx="216.77" cy="427.61" r="2.05" fill="#dcebdc" stroke="#7cc47d" stroke-width="1.5"/>
<circle cx="225.39" cy="434.29" r="2.05" fill="#dcebdc" stroke="#7cc47d" stroke-width="1.5"/>
<circle cx="234.01" cy="430.95" r="2.05" fill="#dcebdc" stroke="#7cc47d" stroke-width="1.5"/>
<circle cx="242.64" cy="405.36" r="2.05" fill="#dcebdc" stroke="#7cc47d" stroke-width="1.5"/>
<circle cx="251.26" cy="412.04" r="2.05" fill="#dcebdc" stroke="#7cc47d" stroke-width="1.5"/>
<circle cx="259.88" cy="407.59" r="2.05" fill="#dcebdc" stroke="#7cc47d" stroke-width="1.5"/>
<circle cx="268.51" cy="422.05" r="2.05" fill="#dcebdc" stroke="#7cc47d" stroke-width="1.5"/>
<circle cx="277.13" cy="405.36" r="2.05" fill="#dcebdc" stroke="#7cc47d" stroke-width="1.5"/>
<circle cx="285.75" cy="429.84" r="2.05" fill="#dcebdc" stroke="#7cc47d" stroke-width="1.5"/>
<circle cx="294.38" cy="412.04" r="2.05" fill="#dcebdc" stroke="#7cc47d" stroke-width="1.5"/>
<path d="M44.30 420.94C47.75 415.60 50.09 413.25 52.92 407.59C56.99 399.45 58.90 384.23 61.55 386.45C65.80 390.01 64.93 408.87 70.17 422.05C71.83 426.23 76.66 431.90 78.79 429.84C83.56 425.23 82.65 414.28 87.42 405.36C89.55 401.37 93.13 396.64 96.04 397.57C100.03 398.86 100.24 408.07 104.66 410.93C107.14 412.52 111.14 411.19 113.29 408.70C118.04 403.18 119.49 388.40 121.91 390.90C126.39 395.52 125.30 413.32 130.53 426.50C132.19 430.68 135.82 434.50 139.16 434.29C142.72 434.06 143.73 427.74 147.78 425.39C150.62 423.74 155.27 427.20 156.40 424.28C162.17 409.40 160.55 386.38 165.03 380.89C167.44 377.92 168.75 395.55 173.65 403.14C175.64 406.23 180.34 404.47 182.27 407.59C187.24 415.59 185.87 425.11 190.90 430.95C192.76 433.12 196.07 428.95 199.52 427.61C202.97 426.28 204.87 425.96 208.14 424.28C211.77 422.40 214.06 417.49 216.77 418.71C220.96 420.61 220.93 428.32 225.39 432.06C227.83 434.11 231.17 434.46 234.01 433.18C238.07 431.34 238.62 426.86 242.64 424.28C245.52 422.41 249.26 424.63 251.26 422.05C256.16 415.73 257.31 410.33 259.88 402.03C264.21 388.08 263.19 375.34 268.51 366.43C270.09 363.77 275.87 369.10 277.13 373.10C282.76 390.91 280.70 411.49 285.75 420.94C287.60 424.40 291.28 404.56 294.38 405.36C298.17 406.34 299.55 417.38 303.00 425.39L303.00 444.30L44.30 444.30Z" fill="#36a2eb" fill-opacity="0.2" stroke="none"/>
<path d="M44.30 420.94C47.75 415.60 50.09 413.25 52.92 407.59C56.99 399.45 58.90 384.23 61.55 386.45C65.80 390.01 64.93 408.87 70.17 422.05C71.83 426.23 76.66 431.90 78.79 429.84C83.56 425.23 82.65 414.28 87.42 405.36C89.55 401.37 93.13 396.64 96.04 397.57C100.03 398.86 100.24 408.07 104.66 410.93C107.14 412.52 111.14 411.19 113.29 408.70C118.04 403.18 119.49 388.40 121.91 390.90C126.39 395.52 125.30 413.32 130.53 426.50C132.19 430.68 135.82 434.50 139.16 434.29C142.72 434.06 143.73 427.74 147.78 425.39C150.62 423.74 155.27 427.20 156.40 424.28C162.17 409.40 160.55 386.38 165.03 380.89C167.44 377.92 168.75 395.55 173.65 403.14C175.64 406.23 180.34 404.47 182.27 407.59C187.24 415.59 185.87 425.11 190.90 430.95C192.76 433.12 196.07 428.95 199.52 427.61C202.97 426.28 204.87 425.96 208.14 424.28C211.77 422.40 214.06 417.49 216.77 418.71C220.96 420.61 220.93 428.32 225.39 432.06C227.83 434.11 231.17 434.46 234.01 433.18C238.07 431.34 238.62 426.86 242.64 424.28C245.52 422.41 249.26 424.63 251.26 422.05C256.16 415.73 257.31 410.33 259.88 402.03C264.21 388.08 263.19 375.34 268.51 366.43C270.09 363.77 275.87 369.10 277.13 373.10C282.76 390.91 280.70 411.49 285.75 420.94C287.60 424.40 291.28 404.56 294.38 405.36C298.17 406.34 299.55 417.38 303.00 425.39" fill="none" stroke="#3a9de6" stroke-width="1.6"/>
<circle cx="44.30" cy="420.94" r="2.05" fill="#cfe5f5" stroke="#3a9de6" stroke-width="1.5"/>
<circle cx="52.92" cy="407.59" r="2.05" fill="#cfe5f5" stroke="#3a9de6" stroke-width="1.5"/>
<circle cx="61.55" cy="386.45" r="2.05" fill="#cfe5f5" stroke="#3a9de6" stroke-width="1.5"/>
<circle cx="70.17" cy="422.05" r="2.05" fill="#cfe5f5" stroke="#3a9de6" stroke-width="1.5"/>
<circle cx="78.79" cy="429.84" r="2.05" fill="#cfe5f5" stroke="#3a9de6" stroke-width="1.5"/>
<circle cx="87.42" cy="405.36" r="2.05" fill="#cfe5f5" stroke="#3a9de6" stroke-width="1.5"/>
<circle cx="96.04" cy="397.57" r="2.05" fill="#cfe5f5" stroke="#3a9de6" stroke-width="1.5"/>
<circle cx="104.66" cy="410.93" r="2.05" fill="#cfe5f5" stroke="#3a9de6" stroke-width="1.5"/>
<circle cx="113.29" cy="408.70" r="2.05" fill="#cfe5f5" stroke="#3a9de6" stroke-width="1.5"/>
<circle cx="121.91" cy="390.90" r="2.05" fill="#cfe5f5" stroke="#3a9de6" stroke-width="1.5"/>
<circle cx="130.53" cy="426.50" r="2.05" fill="#cfe5f5" stroke="#3a9de6" stroke-width="1.5"/>
<circle cx="139.16" cy="434.29" r="2.05" fill="#cfe5f5" stroke="#3a9de6" stroke-width="1.5"/>
<circle cx="147.78" cy="425.39" r="2.05" fill="#cfe5f5" stroke="#3a9de6" stroke-width="1.5"/>
<circle cx="156.40" cy="424.28" r="2.05" fill="#cfe5f5" stroke="#3a9de6" stroke-width="1.5"/>
<circle cx="165.03" cy="380.89" r="2.05" fill="#cfe5f5" stroke="#3a9de6" stroke-width="1.5"/>
<circle cx="173.65" cy="403.14" r="2.05" fill="#cfe5f5" stroke="#3a9de6" stroke-width="1.5"/>
<circle cx="182.27" cy="407.59" r="2.05" fill="#cfe5f5" stroke="#3a9de6" stroke-width="1.5"/>
<circle cx="190.90" cy="430.95" r="2.05" fill="#cfe5f5" stroke="#3a9de6" stroke-width="1.5"/>
<circle cx="199.52" cy="427.61" r="2.05" fill="#cfe5f5" stroke="#3a9de6" stroke-width="1.5"/>
<circle cx="208.14" cy="424.28" r="2.05" fill="#cfe5f5" stroke="#3a9de6" stroke-width="1.5"/>
<circle cx="216.77" cy="418.71" r="2.05" fill="#cfe5f5" stroke="#3a9de6" stroke-width="1.5"/>
<circle cx="225.39" cy="432.06" r="2.05" fill="#cfe5f5" stroke="#3a9de6" stroke-width="1.5"/>
<circle cx="234.01" cy="433.18" r="2.05" fill="#cfe5f5" stroke="#3a9de6" stroke-width="1.5"/>
<circle cx="242.64" cy="424.28" r="2.05" fill="#cfe5f5" stroke="#3a9de6" stroke-width="1.5"/>
<circle cx="251.26" cy="422.05" r="2.05" fill="#cfe5f5" stroke="#3a9de6" stroke-width="1.5"/>
<circle cx="259.88" cy="402.03" r="2.05" fill="#cfe5f5" stroke="#3a9de6" stroke-width="1.5"/>
<circle cx="268.51" cy="366.43" r="2.05" fill="#cfe5f5" stroke="#3a9de6" stroke-width="1.5"/>
<circle cx="277.13" cy="373.10" r="2.05" fill="#cfe5f5" stroke="#3a9de6" stroke-width="1.5"/>
<circle cx="285.75" cy="420.94" r="2.05" fill="#cfe5f5" stroke="#3a9de6" stroke-width="1.5"/>
<circle cx="294.38" cy="405.36" r="2.05" fill="#cfe5f5" stroke="#3a9de6" stroke-width="1.5"/>
<circle cx="303.00" cy="425.39" r="2.05" fill="#cfe5f5" stroke="#3a9de6" stroke-width="1.5"/>
<text x="38.00" y="446.90" text-anchor="end" class="tk" textLength="4.35" lengthAdjust="spacingAndGlyphs">0</text>
<text x="38.00" y="424.65" text-anchor="end" class="tk" textLength="8.71" lengthAdjust="spacingAndGlyphs">20</text>
<text x="38.00" y="402.40" text-anchor="end" class="tk" textLength="8.71" lengthAdjust="spacingAndGlyphs">40</text>
<text x="38.00" y="380.15" text-anchor="end" class="tk" textLength="8.71" lengthAdjust="spacingAndGlyphs">60</text>
<text x="38.00" y="357.90" text-anchor="end" class="tk" textLength="8.71" lengthAdjust="spacingAndGlyphs">80</text>
<text transform="translate(44.30 450.80) rotate(-45)" text-anchor="end" dominant-baseline="central" class="tk" textLength="4.35" lengthAdjust="spacingAndGlyphs">1</text>
<text transform="translate(52.92 450.80) rotate(-45)" text-anchor="end" dominant-baseline="central" class="tk" textLength="4.35" lengthAdjust="spacingAndGlyphs">2</text>
<text transform="translate(61.55 450.80) rotate(-45)" text-anchor="end" dominant-baseline="central" class="tk" textLength="4.35" lengthAdjust="spacingAndGlyphs">3</text>
<text transform="translate(70.17 450.80) rotate(-45)" text-anchor="end" dominant-baseline="central" class="tk" textLength="4.35" lengthAdjust="spacingAndGlyphs">4</text>
<text transform="translate(78.79 450.80) rotate(-45)" text-anchor="end" dominant-baseline="central" class="tk" textLength="4.35" lengthAdjust="spacingAndGlyphs">5</text>
<text transform="translate(87.42 450.80) rotate(-45)" text-anchor="end" dominant-baseline="central" class="tk" textLength="4.35" lengthAdjust="spacingAndGlyphs">6</text>
<text transform="translate(96.04 450.80) rotate(-45)" text-anchor="end" dominant-baseline="central" class="tk" textLength="4.35" lengthAdjust="spacingAndGlyphs">7</text>
<text transform="translate(104.66 450.80) rotate(-45)" text-anchor="end" dominant-baseline="central" class="tk" textLength="4.35" lengthAdjust="spacingAndGlyphs">8</text>
<text transform="translate(113.29 450.80) rotate(-45)" text-anchor="end" dominant-baseline="central" class="tk" textLength="4.35" lengthAdjust="spacingAndGlyphs">9</text>
<text transform="translate(121.91 450.80) rotate(-45)" text-anchor="end" dominant-baseline="central" class="tk" textLength="8.71" lengthAdjust="spacingAndGlyphs">10</text>
<text transform="translate(130.53 450.80) rotate(-45)" text-anchor="end" dominant-baseline="central" class="tk" textLength="8.13" lengthAdjust="spacingAndGlyphs">11</text>
<text transform="translate(139.16 450.80) rotate(-45)" text-anchor="end" dominant-baseline="central" class="tk" textLength="8.71" lengthAdjust="spacingAndGlyphs">12</text>
<text transform="translate(147.78 450.80) rotate(-45)" text-anchor="end" dominant-baseline="central" class="tk" textLength="8.71" lengthAdjust="spacingAndGlyphs">13</text>
<text transform="translate(156.40 450.80) rotate(-45)" text-anchor="end" dominant-baseline="central" class="tk" textLength="8.71" lengthAdjust="spacingAndGlyphs">14</text>
<text transform="translate(165.03 450.80) rotate(-45)" text-anchor="end" dominant-baseline="central" class="tk" textLength="8.71" lengthAdjust="spacingAndGlyphs">15</text>
<text transform="translate(173.65 450.80) rotate(-45)" text-anchor="end" dominant-baseline="central" class="tk" textLength="8.71" lengthAdjust="spacingAndGlyphs">16</text>
<text transform="translate(182.27 450.80) rotate(-45)" text-anchor="end" dominant-baseline="central" class="tk" textLength="8.71" lengthAdjust="spacingAndGlyphs">17</text>
<text transform="translate(190.90 450.80) rotate(-45)" text-anchor="end" dominant-baseline="central" class="tk" textLength="8.71" lengthAdjust="spacingAndGlyphs">18</text>
<text transform="translate(199.52 450.80) rotate(-45)" text-anchor="end" dominant-baseline="central" class="tk" textLength="8.71" lengthAdjust="spacingAndGlyphs">19</text>
<text transform="translate(208.14 450.80) rotate(-45)" text-anchor="end" dominant-baseline="central" class="tk" textLength="8.71" lengthAdjust="spacingAndGlyphs">20</text>
<text transform="translate(216.77 450.80) rotate(-45)" text-anchor="end" dominant-baseline="central" class="tk" textLength="8.71" lengthAdjust="spacingAndGlyphs">21</text>
<text transform="translate(225.39 450.80) rotate(-45)" text-anchor="end" dominant-baseline="central" class="tk" textLength="8.71" lengthAdjust="spacingAndGlyphs">22</text>
<text transform="translate(234.01 450.80) rotate(-45)" text-anchor="end" dominant-baseline="central" class="tk" textLength="8.71" lengthAdjust="spacingAndGlyphs">23</text>
<text transform="translate(242.64 450.80) rotate(-45)" text-anchor="end" dominant-baseline="central" class="tk" textLength="8.71" lengthAdjust="spacingAndGlyphs">24</text>
<text transform="translate(251.26 450.80) rotate(-45)" text-anchor="end" dominant-baseline="central" class="tk" textLength="8.71" lengthAdjust="spacingAndGlyphs">25</text>
<text transform="translate(259.88 450.80) rotate(-45)" text-anchor="end" dominant-baseline="central" class="tk" textLength="8.71" lengthAdjust="spacingAndGlyphs">26</text>
<text transform="translate(268.51 450.80) rotate(-45)" text-anchor="end" dominant-baseline="central" class="tk" textLength="8.71" lengthAdjust="spacingAndGlyphs">27</text>
<text transform="translate(277.13 450.80) rotate(-45)" text-anchor="end" dominant-baseline="central" class="tk" textLength="8.71" lengthAdjust="spacingAndGlyphs">28</text>
<text transform="translate(285.75 450.80) rotate(-45)" text-anchor="end" dominant-baseline="central" class="tk" textLength="8.71" lengthAdjust="spacingAndGlyphs">29</text>
<text transform="translate(294.38 450.80) rotate(-45)" text-anchor="end" dominant-baseline="central" class="tk" textLength="8.71" lengthAdjust="spacingAndGlyphs">30</text>
<text transform="translate(303.00 450.80) rotate(-45)" text-anchor="end" dominant-baseline="central" class="tk" textLength="8.71" lengthAdjust="spacingAndGlyphs">31</text>
<rect x="103.60" y="476.40" width="7.2" height="7.2" fill="#36a2eb" fill-opacity="0.25" stroke="#3a9de6" stroke-width="1.2"/>
<text x="114.50" y="483.20" class="tk" textLength="47.00" lengthAdjust="spacingAndGlyphs">Next 30 Days</text>
<rect x="168.60" y="476.40" width="7.2" height="7.2" fill="#5cb85c" fill-opacity="0.25" stroke="#7cc47d" stroke-width="1.2"/>
<text x="179.50" y="483.20" class="tk" textLength="45.70" lengthAdjust="spacingAndGlyphs">Last 30 Days</text>
<circle cx="308" cy="118" r="4.7" fill="none" stroke="#a9b1bd" stroke-width="0.9"/><rect x="307.5" y="115.1" width="1" height="5.3" fill="#c3c8d0"/><circle cx="620" cy="118" r="4.7" fill="none" stroke="#a9b1bd" stroke-width="0.9"/><rect x="619.5" y="115.1" width="1" height="5.3" fill="#c3c8d0"/><circle cx="932" cy="118" r="4.7" fill="none" stroke="#a9b1bd" stroke-width="0.9"/><rect x="931.5" y="115.1" width="1" height="5.3" fill="#c3c8d0"/><circle cx="308" cy="321" r="4.7" fill="none" stroke="#a9b1bd" stroke-width="0.9"/><rect x="307.5" y="318.1" width="1" height="5.3" fill="#c3c8d0"/>
</svg>
<!-- scrollbar -->
<div class="abs" style="left:950px;top:45px;width:9px;height:392px;background:rgba(0,0,0,0.2)"></div>
<!-- footer -->
<div class="abs" style="left:0;top:575px;width:821px;height:25px;background:#1f242b"></div>
<div class="abs" style="left:820px;top:574.5px;width:140px;height:26px;background:#f7f7f7;box-shadow:0 -1px 2px rgba(0,0,0,0.08)"></div>
<div class="ft" style="left:18.3px">System Date : 26 Oct 2017</div>
<div class="ft" style="left:121.4px">Version 0.1</div>
<div class="ft" style="left:172px">Live Support</div>
<div class="ft" style="left:227.5px">Terms and Condition</div>
<div class="ft" style="left:312.6px">Old Extranet</div>
<div class="abs" style="left:826px;top:580.5px;font-size:11px;color:#555;white-space:nowrap">Status</div>
<svg width="960" height="600" style="position:absolute;left:0;top:0">
<rect x="945.2" y="582" width="8.2" height="8" rx="1.2" fill="#222"/>
<path d="M949.3 583.6V588.4 M946.9 586H951.7" stroke="#fff" stroke-width="1.5"/>
</svg>
</body></html>
